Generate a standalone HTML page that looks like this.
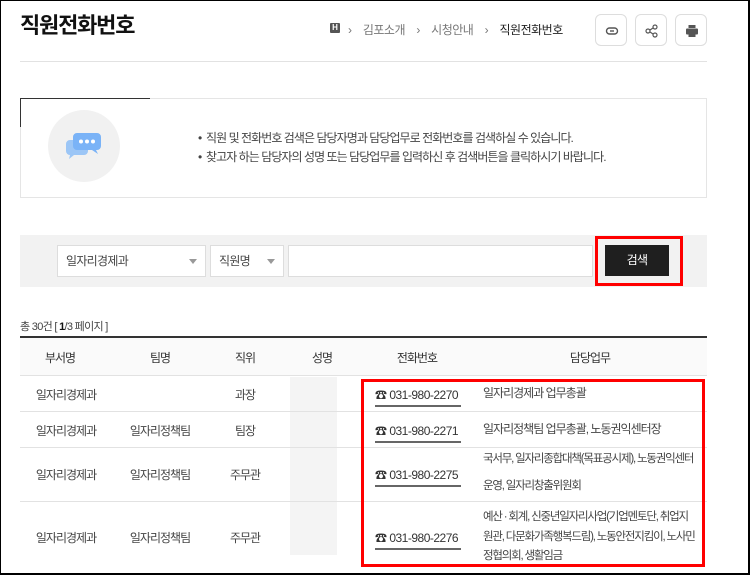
<!DOCTYPE html>
<html><head><meta charset="utf-8"><style>
*{margin:0;padding:0;box-sizing:border-box}
body{width:750px;height:575px;overflow:hidden;background:#fff;font-family:"Liberation Sans","Noto Sans CJK KR",sans-serif;color:#333;position:relative;letter-spacing:-0.7px}
.frame{position:absolute;left:0;top:0;width:750px;height:575px;border:1px solid #000;border-right:2px solid #000;border-bottom:2px solid #000;pointer-events:none}
.a{position:absolute}
.t{font-size:12px;white-space:nowrap}
.btn{position:absolute;top:14px;width:32px;height:32px;border:1px solid #ddd;border-radius:6px;background:#fff}
.btn svg{position:absolute;left:8px;top:8px}
.sel{position:absolute;top:245px;height:32px;background:#fff;border:1px solid #ddd;font-size:12px;color:#444;line-height:30px;padding-left:8px}
.sel:after{content:"";position:absolute;right:8px;top:13px;border-left:4px solid transparent;border-right:4px solid transparent;border-top:5px solid #999}
.hl{position:absolute;left:20px;width:687px;height:1px;background:#e2e2e2}
.c{position:absolute;font-size:12px;color:#444;text-align:center;white-space:nowrap;letter-spacing:-1px}
.ph{position:absolute;left:375px;font-size:12px;color:#333;white-space:nowrap;border-bottom:2px solid #666;padding-bottom:2px;width:86px;letter-spacing:-0.5px}
.du{position:absolute;left:483px;font-size:12px;color:#444;line-height:27px;white-space:nowrap;letter-spacing:-1px}
.dl{font-size:11.5px;letter-spacing:-1.2px}
</style></head><body>
<div class="a" style="left:20px;top:8px;font-size:22px;font-weight:bold;color:#111;letter-spacing:-1.2px">직원전화번호</div>
<div class="a" style="left:330px;top:23px;width:10px;height:10px;background:#555;border-radius:1px;color:#fff;font-size:8px;text-align:center;line-height:10px;font-weight:bold;letter-spacing:0">H</div>
<div class="a t" style="left:348px;top:21px;color:#777;letter-spacing:-0.5px">›&nbsp;&nbsp;&nbsp; 김포소개 &nbsp;&nbsp;&nbsp;›&nbsp;&nbsp;&nbsp; 시청안내 &nbsp;&nbsp;&nbsp;›&nbsp;&nbsp;&nbsp; <span style="color:#222">직원전화번호</span></div>
<div class="btn" style="left:595px"><svg width="16" height="16" viewBox="0 0 16 16"><rect x="2.5" y="5" width="11" height="6" rx="3" fill="none" stroke="#555" stroke-width="1.4"/><line x1="6" y1="8" x2="10" y2="8" stroke="#555" stroke-width="1.4"/></svg></div>
<div class="btn" style="left:635px"><svg width="16" height="16" viewBox="0 0 16 16"><circle cx="4" cy="8" r="2" fill="none" stroke="#555" stroke-width="1.2"/><circle cx="11" cy="4" r="2" fill="none" stroke="#555" stroke-width="1.2"/><circle cx="11" cy="12" r="2" fill="none" stroke="#555" stroke-width="1.2"/><path d="M6 7L9 5M6 9L9 11" stroke="#555" stroke-width="1.2"/></svg></div>
<div class="btn" style="left:675px"><svg width="16" height="16" viewBox="0 0 16 16"><rect x="4.5" y="2" width="7" height="3" fill="#555"/><rect x="2" y="5.5" width="12" height="6" rx="1" fill="#555"/><rect x="4.5" y="10" width="7" height="4" fill="#555"/></svg></div>
<div class="hl" style="top:61px"></div>

<div class="a" style="left:20px;top:98px;width:687px;height:100px;border:1px solid #e5e5e5"></div>
<div class="a" style="left:20px;top:98px;width:130px;height:1px;background:#333"></div>
<div class="a" style="left:20px;top:98px;width:1px;height:29px;background:#333"></div>
<div class="a" style="left:48px;top:110px;width:72px;height:72px;border-radius:50%;background:#f1f1f1"></div>
<svg class="a" style="left:64px;top:130px" width="40" height="32" viewBox="0 0 40 32"><path d="M6 10h14a4 4 0 0 1 4 4v7a4 4 0 0 1-4 4H10l-5 4 1-4a4 4 0 0 1-4-4v-7a4 4 0 0 1 4-4z" fill="#9cc6f6"/><path d="M13 3h20a4 4 0 0 1 4 4v9a4 4 0 0 1-4 4h-1l2 4-6-4H13a4 4 0 0 1-4-4V7a4 4 0 0 1 4-4z" fill="#7ab3f7"/><circle cx="17" cy="11.5" r="2" fill="#fff"/><circle cx="23" cy="11.5" r="2" fill="#fff"/><circle cx="29" cy="11.5" r="2" fill="#fff"/></svg>
<div class="a t" style="left:198px;top:129px;color:#444;line-height:19px;letter-spacing:-0.95px">•&nbsp; 직원 및 전화번호 검색은 담당자명과 담당업무로 전화번호를 검색하실 수 있습니다.<br>•&nbsp; 찾고자 하는 담당자의 성명 또는 담당업무를 입력하신 후 검색버튼을 클릭하시기 바랍니다.</div>

<div class="a" style="left:20px;top:235px;width:687px;height:52px;background:#f2f2f2"></div>
<div class="sel" style="left:57px;width:149px">일자리경제과</div>
<div class="sel" style="left:210px;width:74px">직원명</div>
<div class="a" style="left:288px;top:245px;width:305px;height:32px;background:#fff;border:1px solid #ddd"></div>
<div class="a" style="left:605px;top:245px;width:64px;height:31px;background:#1f1f1f;color:#fff;font-size:12px;text-align:center;line-height:31px">검색</div>
<div class="a" style="left:595px;top:236px;width:88px;height:50px;border:3px solid #f00"></div>

<div class="a t" style="left:20px;top:318px;font-size:11px;color:#444">총 30건 [ <b style="color:#111">1</b>/3 페이지 ]</div>
<div class="a" style="left:20px;top:336px;width:687px;height:2px;background:#333"></div>
<div class="a" style="left:20px;top:338px;width:687px;height:37px;background:#fafafa"></div>
<div class="hl" style="top:375px"></div>
<div class="c" style="left:20px;width:80px;top:349px;color:#333">부서명</div>
<div class="c" style="left:120px;width:80px;top:349px;color:#333">팀명</div>
<div class="c" style="left:205px;width:80px;top:349px;color:#333">직위</div>
<div class="c" style="left:282px;width:80px;top:349px;color:#333">성명</div>
<div class="c" style="left:377px;width:80px;top:349px;color:#333">전화번호</div>
<div class="c" style="left:550px;width:80px;top:349px;color:#333">담당업무</div>
<div class="a" style="left:290px;top:377px;width:47px;height:178px;background:#f4f4f4"></div>
<div class="hl" style="top:411px"></div>
<div class="hl" style="top:447px"></div>
<div class="hl" style="top:501px"></div>

<div class="c" style="left:31px;width:70px;top:386px">일자리경제과</div>
<div class="c" style="left:205px;width:80px;top:386px">과장</div>
<div class="ph" style="top:386px">☎ 031-980-2270</div>
<div class="du" style="top:380px">일자리경제과 업무총괄</div>

<div class="c" style="left:31px;width:70px;top:422px">일자리경제과</div>
<div class="c" style="left:120px;width:80px;top:422px">일자리정책팀</div>
<div class="c" style="left:205px;width:80px;top:422px">팀장</div>
<div class="ph" style="top:422px">☎ 031-980-2271</div>
<div class="du" style="top:416px">일자리정책팀 업무총괄, 노동권익센터장</div>

<div class="c" style="left:31px;width:70px;top:466px">일자리경제과</div>
<div class="c" style="left:120px;width:80px;top:466px">일자리정책팀</div>
<div class="c" style="left:205px;width:80px;top:466px">주무관</div>
<div class="ph" style="top:466px">☎ 031-980-2275</div>
<div class="du dl" style="top:446px">국서무, 일자리종합대책(목표공시제), 노동권익센터<br>운영, 일자리창출위원회</div>

<div class="c" style="left:31px;width:70px;top:529px">일자리경제과</div>
<div class="c" style="left:120px;width:80px;top:529px">일자리정책팀</div>
<div class="c" style="left:205px;width:80px;top:529px">주무관</div>
<div class="ph" style="top:529px">☎ 031-980-2276</div>
<div class="du dl" style="top:508px;line-height:19.5px">예산 · 회계, 신중년일자리사업(기업멘토단, 취업지<br>원관, 다문화가족행복드림), 노동안전지킴이, 노사민<br>정협의회, 생활임금</div>

<div class="a" style="left:361px;top:379px;width:344px;height:188px;border:3px solid #f00"></div>
<div class="frame"></div>
</body></html>
